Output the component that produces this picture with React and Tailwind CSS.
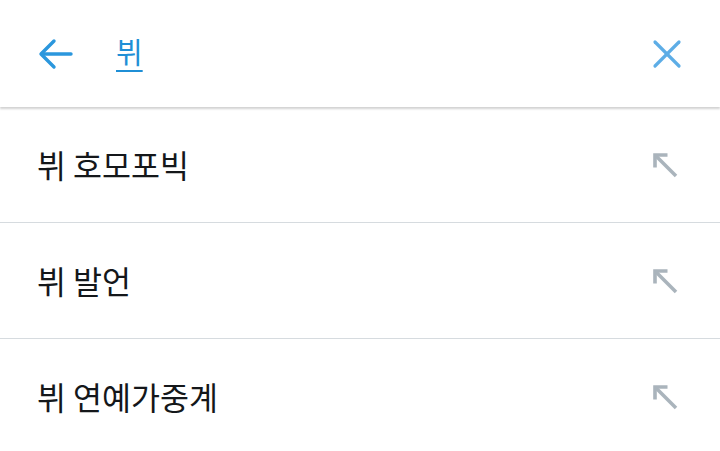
import React from 'react';

const font = { fontFamily: '"Noto Sans CJK KR", "Noto Sans", sans-serif' };

const items = ['뷔 호모포빅', '뷔 발언', '뷔 연예가중계'];

const ArrowUpLeft = () => (
  <svg width="26" height="26" viewBox="0 0 26 26" fill="none" stroke="#aab4bc" strokeWidth="3.6">
    <path d="M3 3 L24 24" />
    <path d="M3 15.5 V3 H15.5" strokeLinejoin="miter" />
  </svg>
);

export default function App() {
  return (
    <div className="w-[720px] h-[451px] bg-white overflow-hidden" style={font}>
      {/* header */}
      <div className="h-[107px] flex items-center px-[38px] shadow-[0_2px_2px_rgba(0,0,0,0.18)] relative z-10 bg-white">
        <svg width="36" height="32" viewBox="0 0 36 32" fill="none" stroke="#2b97dd" strokeWidth="3.4" strokeLinecap="round" strokeLinejoin="round">
          <path d="M33 16 H4" />
          <path d="M16 3 L3 16 L16 29" />
        </svg>
        <span className="ml-[42px] -mt-[4px] text-[29px] leading-none text-[#1f8fd6] underline underline-offset-[6px] decoration-[2px]">뷔</span>
        <div className="flex-1" />
        <svg width="30" height="30" viewBox="0 0 30 30" fill="none" stroke="#5dade6" strokeWidth="3.2" strokeLinecap="round">
          <path d="M3 3 L27 27" />
          <path d="M27 3 L3 27" />
        </svg>
      </div>
      {/* suggestions */}
      <div>
        {items.map((t, i) => (
          <div
            key={t}
            className={`h-[116px] flex items-center pl-[37px] pr-[42px] ${i < items.length - 1 ? 'border-b border-[#d6dbdf]' : ''}`}
          >
            <span className="flex-1 text-[31.5px] font-normal text-[#14171a] leading-none">{t}</span>
            <ArrowUpLeft />
          </div>
        ))}
      </div>
    </div>
  );
}
